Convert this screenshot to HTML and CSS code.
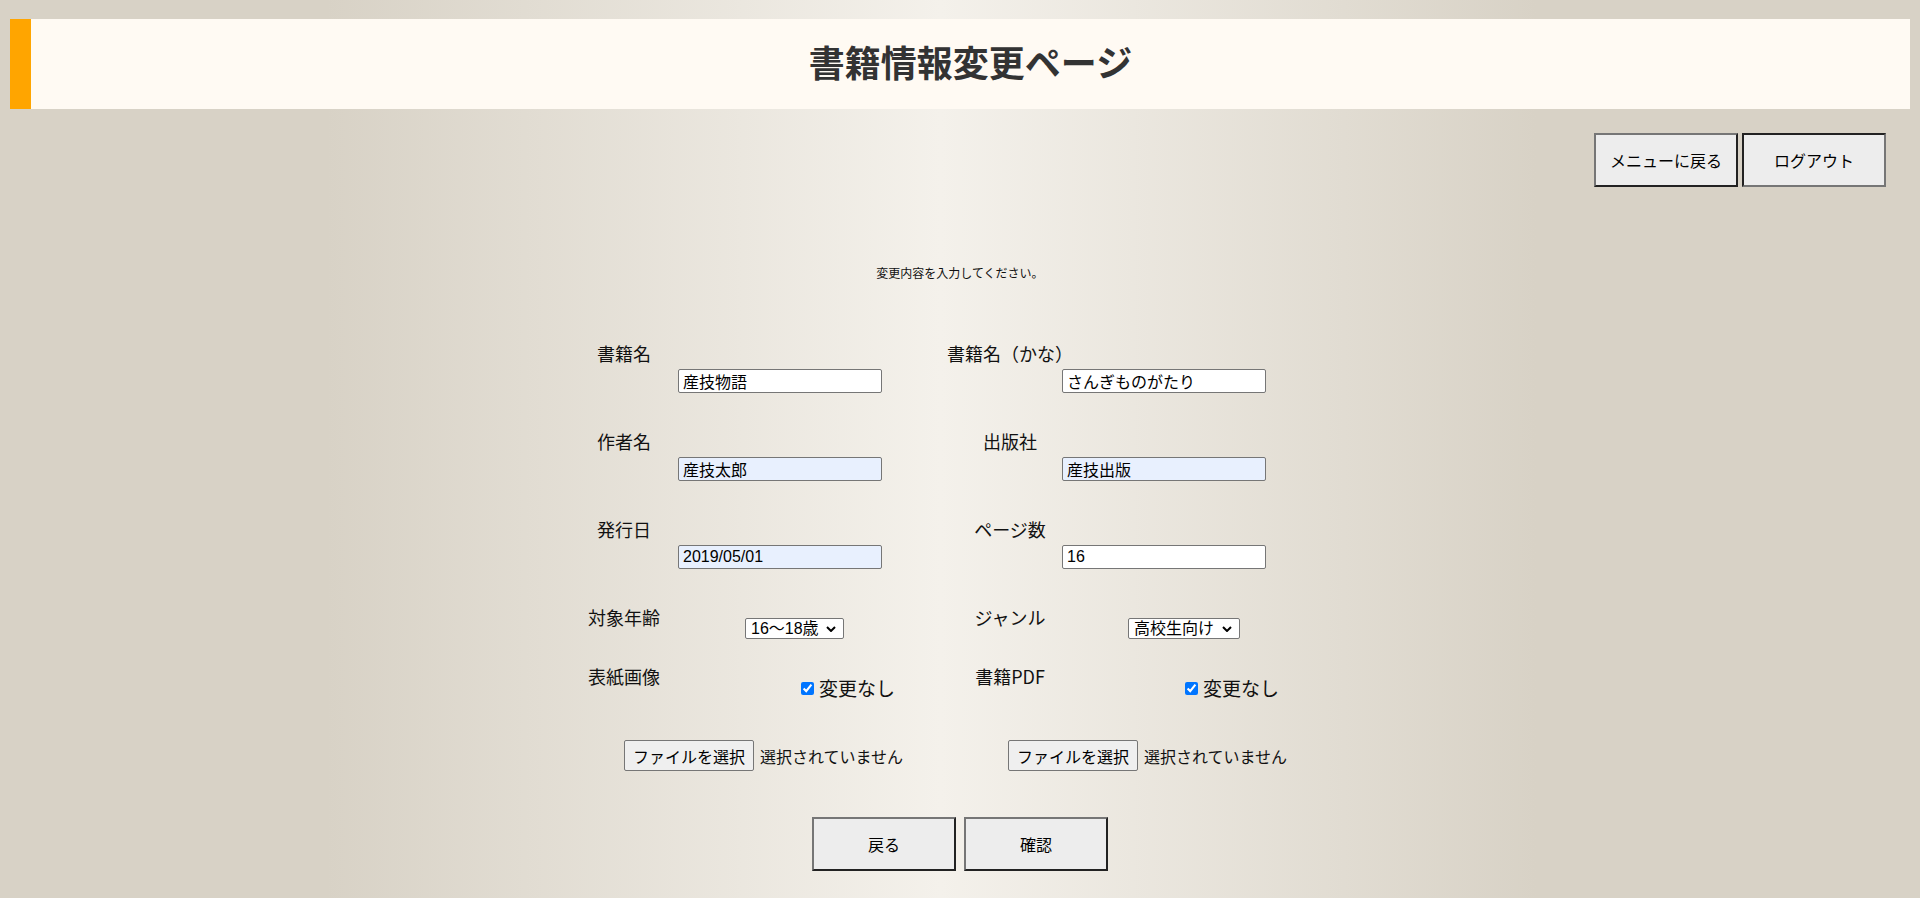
FILE: index.html
```html
<!DOCTYPE html>
<html lang="ja">
<head>
<meta charset="utf-8">
<title>書籍情報変更ページ</title>
<link rel="stylesheet" href="styles.css">
</head>
<body>
<header class="page-header">
  <h1 class="page-title">書籍情報変更ページ</h1>
</header>
<nav class="top-nav">
  <button class="btn btn-large" type="button">メニューに戻る</button>
  <button class="btn btn-large btn-inset" type="button">ログアウト</button>
</nav>
<p class="message">変更内容を入力してください。</p>
<form class="book-form">
  <div class="row row-text">
    <div class="group group-left">
      <div class="label">書籍名</div>
      <div class="field"><input class="text-input" type="text" value="産技物語"></div>
    </div>
    <div class="group group-right">
      <div class="label">書籍名（かな）</div>
      <div class="field"><input class="text-input" type="text" value="さんぎものがたり"></div>
    </div>
  </div>
  <div class="row row-text">
    <div class="group group-left">
      <div class="label">作者名</div>
      <div class="field"><input class="text-input filled" type="text" value="産技太郎"></div>
    </div>
    <div class="group group-right">
      <div class="label">出版社</div>
      <div class="field"><input class="text-input filled" type="text" value="産技出版"></div>
    </div>
  </div>
  <div class="row row-text">
    <div class="group group-left">
      <div class="label">発行日</div>
      <div class="field"><input class="text-input filled" type="text" value="2019/05/01"></div>
    </div>
    <div class="group group-right">
      <div class="label">ページ数</div>
      <div class="field"><input class="text-input" type="text" value="16"></div>
    </div>
  </div>
  <div class="row row-select">
    <div class="group group-left inline">
      <div class="label">対象年齢</div>
      <span class="select-wrap select-age">
        <select class="select"><option>16〜18歳</option></select>
        <svg class="chevron" width="10" height="6" viewBox="0 0 10 6"><path d="M1 1 L5 5 L9 1" fill="none" stroke="#000" stroke-width="2"/></svg>
      </span>
    </div>
    <div class="group group-right inline">
      <div class="label">ジャンル</div>
      <span class="select-wrap select-genre">
        <select class="select"><option>高校生向け</option></select>
        <svg class="chevron" width="10" height="6" viewBox="0 0 10 6"><path d="M1 1 L5 5 L9 1" fill="none" stroke="#000" stroke-width="2"/></svg>
      </span>
    </div>
  </div>
  <div class="row row-check">
    <div class="group group-left inline">
      <div class="label">表紙画像</div>
      <label class="check"><input type="checkbox" checked>変更なし</label>
    </div>
    <div class="group group-right inline">
      <div class="label">書籍PDF</div>
      <label class="check"><input type="checkbox" checked>変更なし</label>
    </div>
  </div>
  <div class="row row-file">
    <div class="group group-left">
      <div class="file"><button class="file-btn" type="button">ファイルを選択</button><span class="file-name">選択されていません</span></div>
    </div>
    <div class="group group-right">
      <div class="file"><button class="file-btn" type="button">ファイルを選択</button><span class="file-name">選択されていません</span></div>
    </div>
  </div>
  <div class="actions">
    <button class="btn btn-large" type="button">戻る</button>
    <button class="btn btn-large" type="button">確認</button>
  </div>
</form>
</body>
</html>
```
FILE: styles.css
```css
html {
  min-height: 100%;
  background: linear-gradient(to right, #d8d2c6 0%, #d8d2c6 17%, #f4f1eb 49%, #d8d2c6 80%, #d8d2c6 100%);
}

body {
  margin: 0;
  padding: 19px 10px 0;
  font-family: "Noto Sans CJK JP", "Liberation Sans", sans-serif;
  color: #000;
}

.page-header {
  height: 90px;
  box-sizing: border-box;
  background: #fffaf3;
  border-left: 21px solid #ffa500;
  padding-top: 24px;
}

.page-title {
  margin: 0;
  font-size: 36px;
  line-height: 36px;
  font-weight: 700;
  color: #333;
  text-align: center;
}

.top-nav {
  display: flex;
  justify-content: flex-end;
  gap: 4px;
  margin-top: 24px;
  padding-right: 24px;
}

.btn {
  font-family: "Noto Sans CJK JP", "Liberation Sans", sans-serif;
  font-size: 16px;
  line-height: 20px;
  color: #000;
  background: #ededed;
  border: 2px solid;
  border-color: #767676 #222 #222 #767676;
  padding: 0;
  cursor: pointer;
}

.btn-large {
  width: 144px;
  height: 54px;
}

.btn-inset {
  border-color: #222 #767676 #767676 #222;
}

.message {
  margin: 78px 0 0;
  font-size: 12px;
  line-height: 16px;
  text-align: center;
  color: #111;
}

.book-form {
  width: 780px;
  margin: 63px auto 0;
}

.row {
  display: flex;
}

.group-left {
  width: 375px;
}

.group-right {
  flex: 1;
}

.label {
  font-size: 18px;
  line-height: 18px;
  text-align: center;
  white-space: nowrap;
  color: #111;
}

.group-left .label {
  width: 108px;
}

.group-right .label {
  width: 130px;
}

.row-text {
  margin-bottom: 39px;
}

.row-text .field {
  margin-top: 7px;
}

.group-left .field {
  margin-left: 108px;
}

.group-right .field {
  margin-left: 117px;
}

.text-input {
  display: block;
  box-sizing: border-box;
  width: 204px;
  height: 24px;
  padding: 0 4px;
  border: 1px solid #767676;
  border-radius: 2px;
  background: #fff;
  font-family: "Liberation Sans", "Noto Sans CJK JP", sans-serif;
  font-size: 16px;
  color: #000;
}

.text-input.filled {
  background: #e8f0fe;
}

.inline {
  display: flex;
  align-items: flex-start;
}

.row-select {
  margin-bottom: 28px;
}

.select-wrap {
  position: relative;
  display: block;
  margin-top: 10px;
}

.select {
  display: block;
  box-sizing: border-box;
  width: 100%;
  height: 21px;
  padding: 0 18px 0 5px;
  border: 1px solid #767676;
  border-radius: 2px;
  background: #fff;
  font-family: "Liberation Sans", "Noto Sans CJK JP", sans-serif;
  font-size: 16px;
  line-height: 19px;
  color: #000;
  appearance: none;
  -webkit-appearance: none;
}

.chevron {
  position: absolute;
  right: 8px;
  top: 8px;
  pointer-events: none;
}

.select-age {
  width: 99px;
  margin-left: 67px;
}

.select-genre {
  width: 112px;
  margin-left: 53px;
}

.row-check {
  margin-bottom: 43px;
}

.check {
  display: flex;
  align-items: center;
  margin-top: 12px;
  font-size: 19px;
  line-height: 18px;
  color: #111;
}

.check input {
  width: 13px;
  height: 13px;
  margin: 0 5px 0 0;
  accent-color: #0075ff;
}

.group-left .check {
  margin-left: 123px;
}

.group-right .check {
  margin-left: 110px;
}

.file {
  display: flex;
  align-items: center;
  gap: 6px;
}

.group-left .file {
  margin-left: 54px;
}

.group-right .file {
  margin-left: 63px;
}

.file-btn {
  box-sizing: border-box;
  width: 130px;
  height: 31px;
  padding: 0;
  border: 1px solid #767676;
  border-radius: 2px;
  background: #efefef;
  font-family: "Noto Sans CJK JP", "Liberation Sans", sans-serif;
  font-size: 16px;
  color: #000;
}

.file-name {
  font-size: 16px;
  color: #111;
}

.actions {
  display: flex;
  justify-content: center;
  gap: 8px;
  margin-top: 46px;
}
```
